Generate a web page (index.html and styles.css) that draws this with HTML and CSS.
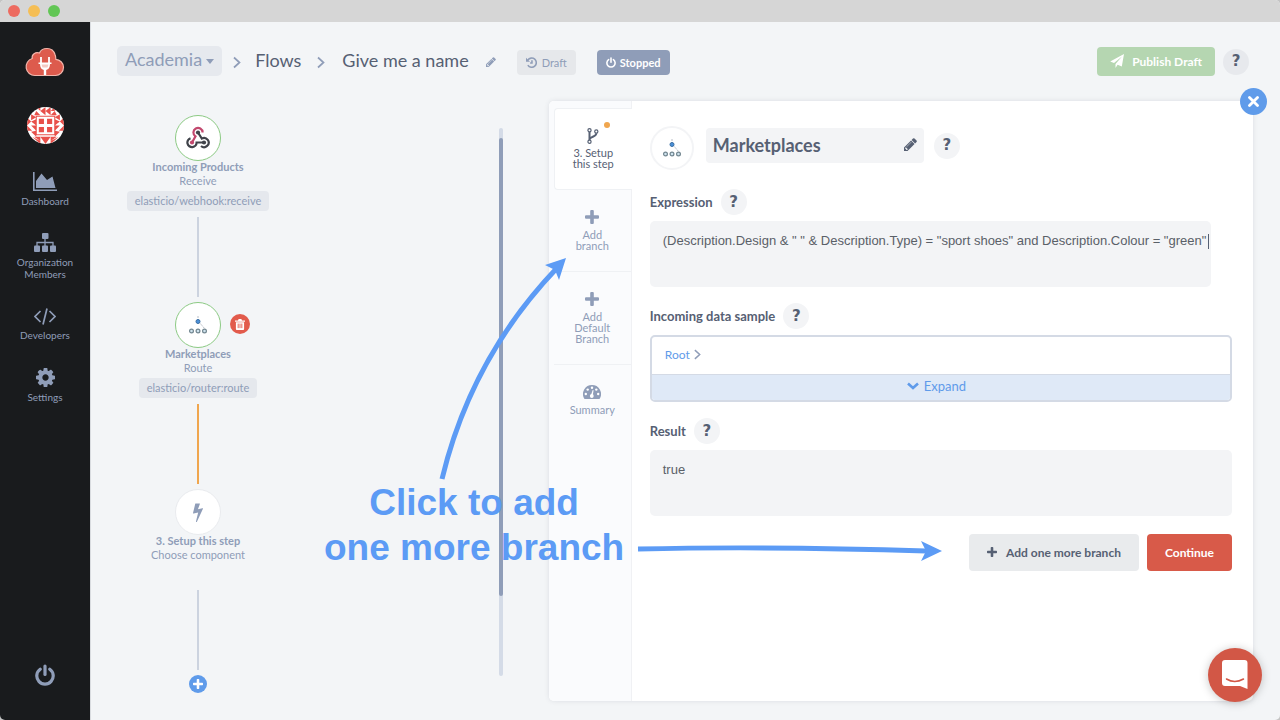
FILE: index.html
```html
<!DOCTYPE html>
<html lang="en">
<head>
<meta charset="utf-8">
<title>Academia – Flow editor</title>
<link rel="stylesheet" href="styles.css">
</head>
<body>
<svg class="defs" aria-hidden="true">
  <symbol id="plus" viewBox="0 0 14 14"><path d="M5.200 1a1 1 0 0 1 1-1h1.600a1 1 0 0 1 1 1v4.200H13a1 1 0 0 1 1 1v1.600a1 1 0 0 1-1 1H8.800V13a1 1 0 0 1-1 1H6.200a1 1 0 0 1-1-1V8.800H1a1 1 0 0 1-1-1V6.200a1 1 0 0 1 1-1h4.200z"/></symbol>
  <symbol id="pencil" viewBox="128 128 1536 1536"><path d="M491 1536l91-91-235-235-91 91v107h128v128h107zm523-928q0-22-22-22-10 0-17 7l-542 542q-7 7-7 17 0 22 22 22 10 0 17-7l542-542q7-7 7-17zm-54-192l416 416-832 832h-416v-416zm683 96q0 53-37 90l-166 166-416-416 166-165q36-38 90-38 53 0 91 38l235 234q37 39 37 91z"/></symbol>
  <symbol id="power" viewBox="0 0 20 22"><g fill="none" stroke="currentColor" stroke-width="3.200" stroke-linecap="round"><path d="M5.200 5.200a8.200 8.200 0 1 0 9.600 0"/><path d="M10 2v8.500"/></g></symbol>
  <symbol id="chevron" viewBox="0 0 8 12"><path d="M1 1l5.500 5L1 11" fill="none" stroke="currentColor" stroke-width="1.700"/></symbol>
  <symbol id="router" viewBox="0 0 20 20"><path d="M10 1v4M11 7l6 7" stroke="#b9bec6" stroke-width="1" stroke-dasharray="2 1"/><circle cx="10" cy="6.500" r="2" fill="#4a90d9" stroke="#3b6fa5"/><g fill="#cfe3ee" stroke="#71858f" stroke-width="1.200"><circle cx="3.500" cy="16" r="1.900"/><circle cx="10" cy="16" r="1.900"/><circle cx="16.500" cy="16" r="1.900"/></g></symbol>
</svg>

<div class="window">
  <div class="titlebar"><span class="light light-close"></span><span class="light light-min"></span><span class="light light-max"></span></div>
  <div class="app">
    <nav class="sidebar">
      <a class="logo" href="#" aria-label="Home"><svg width="40" height="30" viewBox="0 0 40 30"><path d="M10 28.500a8.700 8.700 0 0 1-2.800-17C6.500 7.500 10.500 4.500 14.500 6c2-5.500 13-7 15.500 1.500 1 2.200.8 3.700.8 4.800 4 .2 7.700 3.600 7.700 8 0 4.700-3.600 8.200-8 8.200z" fill="#dd5b4d" stroke="#f2b6ac" stroke-width="1.200"/><path d="M16 10v6M24 10v6" stroke="#fff" stroke-width="1.800"/><path d="M13.500 15.500h13v1.500h-1.500c0 3.500-1.500 5.500-3.800 6v5h-2.400v-5c-2.300-.5-3.800-2.500-3.800-6h-1.500z" fill="#fff"/><path d="M16.500 17.500h7l-1 3h-5z" fill="#f3cbc5"/></svg></a>
      <a class="avatar" href="#" aria-label="Profile"><svg width="37" height="37" viewBox="0 0 36 36">
        <path fill="#fff" d="M0 0h36v36H0z"/>
        <g fill="#e8504a"><path d="M9 0l4 4V0zM13 4l5-4v8zM18 4l5-4v8zM23 4l4-4v4zM9 4l4 4H7zM27 4l-4 4h6zM4 7l5 3-5 3zM32 7l-5 3 5 3zM0 10l4 4-4 4zM4 14l5-2v6zM36 10l-4 4 4 4zM32 14l-5-2v6zM0 18l5 5H0zM4 18l5 5v-5zM36 18l-5 5h5zM32 18l-5 5v-5zM4 24l5 5V23zM32 24l-5 5v-6zM7 29l6 4v-4zM29 29l-6 4v-4zM13 29l5 7v-7zM23 29l-5 7v-7zM5 29l8 7v-3zM31 29l-8 7v-3z"/>
        <path d="M8.500 8.500h19v19h-19z"/></g>
        <path fill="#fff" d="M9.500 9.500h17v17h-17z"/><path fill="#e8504a" d="M11.500 11.500h5v5h-5zM19.500 11.500h5v5h-5zM11.500 19.500h5v5h-5zM19.500 19.500h5v5h-5z"/></svg></a>
      <a class="nav-item" href="#"><svg width="24" height="19" viewBox="0 0 24 19"><path d="M.8 0v18.200H24" fill="none" stroke="currentColor" stroke-width="1.600"/><path fill="currentColor" d="M3 16V9l5.500-7.500L14 8l5.500-3.500L22.500 16z"/></svg><span>Dashboard</span></a>
      <a class="nav-item nav-org" href="#"><svg width="22" height="19" viewBox="0 0 22 19"><g fill="currentColor"><rect x="8" width="6.500" height="6" rx="1"/><rect y="12.500" width="6" height="6.500" rx="1"/><rect x="8" y="12.500" width="6" height="6.500" rx="1"/><rect x="16" y="12.500" width="6" height="6.500" rx="1"/></g><path d="M11 5v8M3 13V9.500h16V13" fill="none" stroke="currentColor" stroke-width="1.300"/></svg><span>Organization Members</span></a>
      <a class="nav-item nav-dev" href="#"><svg width="22" height="17" viewBox="0 0 22 17"><g fill="none" stroke="currentColor" stroke-width="1.700"><path d="M6.500 3L1 8.500 6.500 14M15.500 3L21 8.500 15.500 14M13 .5l-4 16"/></g></svg><span>Developers</span></a>
      <a class="nav-item nav-set" href="#"><svg width="19" height="19" viewBox="128 128 1536 1536"><path fill="currentColor" d="M1152 896q0-106-75-181t-181-75-181 75-75 181 75 181 181 75 181-75 75-181zm512-109v222q0 12-8 23t-20 13l-185 28q-19 54-39 91 35 50 107 138 10 12 10 25t-9 23q-27 37-99 108t-94 71q-12 0-26-9l-138-108q-44 23-91 38-16 136-29 186-7 28-36 28h-222q-14 0-24.500-8.500t-11.500-21.500l-28-184q-49-16-90-37l-141 107q-10 9-25 9-14 0-25-11-126-114-165-168-7-10-7-23 0-12 8-23 15-21 51-66.500t54-70.500q-27-50-41-99l-183-27q-13-2-21-12.500t-8-23.500v-222q0-12 8-23t19-13l186-28q14-46 39-92-40-57-107-138-10-12-10-24 0-10 9-23 26-36 98.500-107.500t94.500-71.500q13 0 26 10l138 107q44-23 91-38 16-136 29-186 7-28 36-28h222q14 0 24.500 8.500t11.500 21.500l28 184q49 16 90 37l142-107q9-9 24-9 13 0 25 10 129 119 165 170 7 8 7 22 0 12-8 23-15 21-51 66.500t-54 70.500q26 50 41 98l183 28q13 2 21 12.500t8 23.500z"/></svg><span>Settings</span></a>
      <button class="logout" aria-label="Log out"><svg width="20" height="22"><use href="#power"/></svg></button>
    </nav>

    <main class="main">
      <header class="topbar">
        <button class="org-menu" aria-haspopup="true">Academia<span class="arrow-down"></span></button>
        <svg class="crumb-sep" width="8" height="13"><use href="#chevron"/></svg>
        <a class="crumb" href="#">Flows</a>
        <svg class="crumb-sep" width="8" height="13"><use href="#chevron"/></svg>
        <span class="crumb crumb-name">Give me a name</span>
        <button class="edit-name" aria-label="Rename flow"><svg width="10" height="10" fill="currentColor"><use href="#pencil"/></svg></button>
        <span class="badge badge-draft"><svg width="11" height="11" viewBox="0 0 12 12"><path d="M2 3.500A5 5 0 1 1 2 8.800M6.500 3.500v3H4.500" fill="none" stroke="currentColor" stroke-width="1.700"/><path fill="currentColor" d="M0 .8v4.400h4.400z"/></svg>Draft</span>
        <button class="badge badge-stopped"><svg width="10" height="11"><use href="#power"/></svg>Stopped</button>
        <button class="publish"><svg width="14" height="14" viewBox="0 0 14 14"><path fill="currentColor" d="M14 0l-2.200 12.500-4.200-1.800L5.500 14v-4L12 2.500 4 9 .2 7.500z"/></svg>Publish Draft</button>
        <button class="help help-top" aria-label="Help">?</button>
      </header>

      <div class="workspace">
        <section class="canvas">
          <div class="flow">
            <div class="node node-done"><svg width="26" height="26" viewBox="0 0 26 26" fill="none" stroke-width="2.200"><path d="M7 17.500L10.500 11.400A4.600 4.600 0 1 1 17.600 7.500" stroke="#c2486e"/><path d="M13 7.500L16.800 13.500A4.600 4.600 0 1 1 16 21M5.500 13.200A4.600 4.600 0 1 0 11.600 17.500H19" stroke="#40434a"/><circle cx="13" cy="7.500" r="2.100" fill="#40434a"/><circle cx="7" cy="17.500" r="2.100" fill="#c2486e"/><circle cx="19" cy="17.500" r="2.100" fill="#40434a"/></svg></div>
            <strong class="node-title">Incoming Products</strong>
            <span class="node-sub">Receive</span>
            <span class="node-chip">elasticio/webhook:receive</span>
            <span class="link"></span>
            <div class="node node-done"><svg width="20" height="20"><use href="#router"/></svg>
              <button class="remove" aria-label="Delete step"><svg width="10" height="11" viewBox="0 0 11 12"><path fill="#fff" d="M4 0h3l.7 1.500H11V3H0V1.500h3.300zM1 3.500h9V11a1 1 0 0 1-1 1H2a1 1 0 0 1-1-1z"/><path d="M3.500 5v5M5.500 5v5M7.500 5v5" stroke="#e25b4c"/></svg></button></div>
            <strong class="node-title">Marketplaces</strong>
            <span class="node-sub">Route</span>
            <span class="node-chip">elasticio/router:route</span>
            <span class="link link-active"></span>
            <div class="node"><svg width="20" height="20" viewBox="0 0 1792 1792"><path fill="#8f9db8" d="M1333 566q18 20 7 44l-540 1157q-13 25-42 25-4 0-14-2-17-5-25.500-19t-4.500-30l197-808-406 101q-4 1-12 1-18 0-31-11-18-15-13-39l201-825q4-14 16-23t28-9h328q19 0 32 12.500t13 29.500q0 8-5 18l-171 463 396-98q8-2 12-2 19 0 34 15z"/></svg></div>
            <strong class="node-title">3. Setup this step</strong>
            <span class="node-sub">Choose component</span>
            <span class="link link-last"></span>
            <button class="add-step" aria-label="Add step"><svg width="10" height="10" fill="#fff"><use href="#plus"/></svg></button>
          </div>
          <div class="track"><div class="thumb"></div></div>
        </section>

        <section class="panel">
          <button class="close" aria-label="Close"><svg width="11" height="11" viewBox="0 0 11 11"><path d="M1.500 1.500l8 8M9.500 1.500l-8 8" stroke="#fff" stroke-width="2.800" stroke-linecap="round"/></svg></button>
          <div class="tabs">
            <button class="tab tab-active"><span class="dot"></span><svg width="12" height="16" viewBox="0 0 12 16" fill="none" stroke="currentColor"><g stroke-width="1.200"><circle cx="2.500" cy="2.200" r="1.600"/><circle cx="2.500" cy="13.800" r="1.600"/><circle cx="9.300" cy="3.500" r="1.600"/></g><path d="M2.500 4v8M9.300 5.200c0 4-6 3-6.500 6" stroke-width="2"/></svg>3. Setup<br>this step</button>
            <button class="tab"><svg width="14" height="14" fill="currentColor"><use href="#plus"/></svg>Add<br>branch</button>
            <button class="tab tab-tall"><svg width="14" height="14" fill="currentColor"><use href="#plus"/></svg>Add<br>Default<br>Branch</button>
            <button class="tab tab-last"><svg width="18" height="14" viewBox="0 0 18 14"><path fill="currentColor" d="M9 0a9 9 0 0 1 7.800 13.500q-.3.500-.8.500H2q-.5 0-.8-.5A9 9 0 0 1 9 0z"/><g fill="#fff"><circle cx="2.800" cy="9" r="1.200"/><circle cx="4.700" cy="4.600" r="1.200"/><circle cx="9" cy="2.700" r="1.200"/><circle cx="13.300" cy="4.600" r="1.200"/><circle cx="15.200" cy="9" r="1.200"/><circle cx="8.800" cy="11" r="1.900"/><path d="M8 10l1.700-5 .9.300-.9 5.200z"/></g></svg>Summary</button>
          </div>
          <form class="form">
            <div class="step-head">
              <span class="step-icon"><svg width="20" height="20"><use href="#router"/></svg></span>
              <button type="button" class="step-name">Marketplaces<svg width="13" height="13" fill="currentColor"><use href="#pencil"/></svg></button>
              <button type="button" class="help" aria-label="Help">?</button>
            </div>
            <div class="label-row"><label for="expression">Expression</label><button type="button" class="help" aria-label="Help on expression">?</button></div>
            <div class="expression"><textarea id="expression" class="area area-code" spellcheck="false">(Description.Design &amp; " " &amp; Description.Type) = "sport shoes" and Description.Colour = "green"</textarea><span class="caret"></span></div>
            <div class="label-row"><span>Incoming data sample</span><button type="button" class="help" aria-label="Help on data sample">?</button></div>
            <div class="sample">
              <div class="sample-path"><a href="#">Root</a><svg width="7" height="11"><use href="#chevron"/></svg></div>
              <button type="button" class="expand"><svg width="12" height="8" viewBox="0 0 12 8"><path d="M1 1.500l5 4.500 5-4.500" fill="none" stroke="currentColor" stroke-width="2.600"/></svg>Expand</button>
            </div>
            <div class="label-row"><label for="result">Result</label><button type="button" class="help" aria-label="Help on result">?</button></div>
            <textarea id="result" class="area" readonly>true</textarea>
            <div class="actions">
              <button type="button" class="btn btn-add"><svg width="10" height="10" fill="currentColor"><use href="#plus"/></svg>Add one more branch</button>
              <button type="button" class="btn btn-go">Continue</button>
            </div>
          </form>
        </section>
      </div>
    </main>
  </div>
  <div class="callout">
    <svg class="callout-arrows" width="1280" height="720" viewBox="0 0 1280 720"><g fill="none" stroke="#5c9bf5" stroke-width="5"><path d="M442 479Q471 358 557 268"/><path d="M638 549Q770 546 926 551"/></g><path fill="#5c9bf5" d="M566 258l-21 7 10 5 4 10zM942 551l-21-10 5 10-5 10z"/></svg>
    <p class="callout-text">Click to add<br>one more branch</p>
  </div>
  <button class="chat" aria-label="Open chat"><svg width="26" height="30" viewBox="0 0 26 30"><path fill="#fff" d="M3 0h19.500a3 3 0 0 1 3 3v26L18 26H3a3 3 0 0 1-3-3V3a3 3 0 0 1 3-3z"/><path d="M4.500 19q8 5 17 0" fill="none" stroke="#d25746" stroke-width="1.500" stroke-linecap="round"/></svg></button>
</div>
</body>
</html>
```
FILE: styles.css
```css
* { box-sizing: border-box; }
body { margin: 0; background: #c4c4c4; font-family: Lato, "Liberation Sans", sans-serif; font-size: 12px; color: #566073; }
button { font: inherit; color: inherit; border: 0; background: none; padding: 0; margin: 0; cursor: pointer; }
a { color: inherit; text-decoration: none; }
svg { flex: none; display: block; }
.defs { position: absolute; width: 0; height: 0; }

.window { position: relative; display: flex; flex-direction: column; min-height: 100vh; border-radius: 5px; overflow: hidden; background: #f3f5f7; }
.titlebar { display: flex; align-items: center; gap: 8px; height: 22px; padding-left: 8px; background: #d6d6d6; }
.light { width: 12px; height: 12px; border-radius: 50%; }
.light-close { background: #ed6b60; }
.light-min { background: #f5be55; }
.light-max { background: #62c655; }
.app { display: flex; flex: 1; }

.sidebar { display: flex; flex-direction: column; align-items: center; width: 90px; padding: 25px 0 34px; background: #191b1d; color: #8f9db8; font-size: 10px; line-height: 12px; }
.avatar { width: 37px; height: 37px; margin: 30px 0 28px; border-radius: 50%; overflow: hidden; }
.nav-item { display: flex; flex-direction: column; align-items: center; gap: 4px; width: 68px; text-align: center; }
.nav-org { margin-top: 26px; }
.nav-dev { margin-top: 28px; }
.nav-set { margin-top: 27px; }
.logout { margin-top: auto; }

.main { display: flex; flex-direction: column; flex: 1; min-width: 0; border-left: 1px solid #d9dce0; }
.topbar { display: flex; align-items: center; height: 79px; padding: 0 31px 0 26px; }
.org-menu { display: flex; align-items: center; gap: 4px; height: 30px; padding: 0 8px 3px; margin-bottom: 2px; border-radius: 5px; background: #e6e9ee; color: #8f9db8; font-size: 18px; }
.arrow-down { margin-top: 4px; border: 4px solid transparent; border-top: 5px solid #8f9db8; border-bottom: 0; }
.crumb-sep { margin: 2px 14px 0 11px; color: #8f9db8; }
.crumb { font-size: 18px; line-height: 24px; padding-bottom: 3px; }
.crumb + .crumb-sep { margin-left: 16px; margin-right: 17px; }
.edit-name { margin: 0 21px 0 17px; color: #8f9db8; }
.badge { display: flex; align-items: center; gap: 5px; height: 25px; padding: 0 9px; margin-top: 1px; border-radius: 4px; font-size: 11px; }
.badge-draft { margin-right: 21px; background: #e6e8eb; color: #8f9db8; }
.badge-stopped { background: #8f9db8; color: #fff; font-weight: 700; gap: 4px; }
.publish { display: flex; align-items: center; gap: 8px; height: 29px; margin: 0 8px 0 auto; padding: 0 13px 1px; border-radius: 4px; background: #b5d6b1; color: #fff; font-weight: 700; }
.help { flex: none; width: 26px; height: 26px; border-radius: 50%; background: #f3f4f6; color: #566073; font: 700 15px/25px "DejaVu Sans", sans-serif; text-align: center; }
.help-top { background: #e7e9ed; }

.workspace { display: grid; grid-template-columns: minmax(0, 13fr) minmax(0, 20fr); flex: 1; padding: 0 27px 19px 0; }
.canvas { display: flex; justify-content: space-between; padding: 14px 46px 0 0; }
.flow { display: flex; flex-direction: column; align-items: center; width: 214px; color: #8f9db8; }
.node { position: relative; display: flex; align-items: center; justify-content: center; width: 46px; height: 46px; border: 1px solid #e9ebee; border-radius: 50%; background: #fff; }
.node-done { border-color: #8cca84; }
.remove { position: absolute; left: 54px; top: 11px; display: flex; align-items: center; justify-content: center; width: 20px; height: 20px; border-radius: 50%; background: #e25b4c; }
.node-title { font-size: 11px; line-height: 12px; }
.node-sub { font-size: 11px; line-height: 15px; }
.node-chip { margin-top: 3px; padding: 0 8px; border-radius: 4px; background: #e5e8ed; font-size: 11px; line-height: 20px; }
.link { width: 2px; height: 80px; margin: 6px 0 5px; background: #ccd3df; }
.link-active { background: #f0a64e; }
.link-last { margin-top: 28px; }
.add-step { display: flex; align-items: center; justify-content: center; width: 18px; height: 18px; border-radius: 50%; background: #5f9bea; }
.track { width: 4px; height: 548px; margin-top: 13px; padding-top: 10px; border-radius: 2px; background: #d4dbe7; }
.thumb { height: 458px; border-radius: 2px; background: #8f9db8; }

.panel { position: relative; display: flex; min-height: 600px; border-radius: 5px; background: #fff; box-shadow: 0 0 5px rgba(60, 70, 90, .13); }
.close { position: absolute; right: -14px; top: -13px; display: flex; align-items: center; justify-content: center; width: 27px; height: 27px; border-radius: 50%; background: #5f9bea; }
.tabs { flex: none; width: 83px; padding: 7px 0 0 5px; border-right: 1px solid #f0f1f4; border-radius: 5px 0 0 5px; background: #fafbfd; }
.tab { position: relative; display: flex; flex-direction: column; align-items: center; gap: 5px; width: 100%; height: 82px; padding-top: 20px; border-bottom: 1px solid #eff1f4; color: #8f9db8; font-size: 11px; line-height: 11px; text-align: center; }
.tab-active { width: 78px; padding-top: 19px; gap: 3px; border: 1px solid #eff1f4; border-right: 0; border-radius: 4px 0 0 4px; background: #fff; color: #566073; }
.tab-tall { height: 93px; }
.tab-last { border: 0; }
.dot { position: absolute; left: 49px; top: 13px; width: 6px; height: 6px; border-radius: 50%; background: #f0a64e; }

.form { flex: 1; min-width: 0; padding: 25px 21px 26px 18px; }
.step-head { display: flex; align-items: center; gap: 10px; margin-bottom: 20px; }
.step-icon { display: flex; align-items: center; justify-content: center; width: 44px; height: 44px; margin-right: 2px; border: 2px solid #f3f4f6; border-radius: 50%; }
.step-name { display: flex; align-items: center; justify-content: space-between; width: 218px; height: 35px; margin-bottom: 5px; padding: 0 7px 2px; border-radius: 4px; background: #f3f4f6; font-size: 18px; font-weight: 700; }
.step-head .help { margin-bottom: 5px; }
.label-row { display: flex; align-items: center; gap: 8px; height: 24px; margin-bottom: 7px; font-size: 13px; font-weight: 700; }
.area { display: block; width: 100%; height: 66px; padding: 12px 13px; border: 0; border-radius: 5px; background: #f3f4f6; color: #5a6068; font: 13px/15px "Liberation Sans", Arial, sans-serif; resize: none; outline: 0; overflow: hidden; }
.area-code { padding-right: 2px; }
.expression { position: relative; margin: 0 21px 17px 0; }
.caret { position: absolute; right: 2px; top: 13px; width: 1px; height: 15px; background: #566073; }
.sample { margin-bottom: 17px; border: 2px solid #d4dae5; border-radius: 5px; overflow: hidden; }
.sample-path { display: flex; align-items: center; gap: 4px; height: 37px; padding: 0 0 2px 13px; color: #5f9bea; }
.sample-path svg { color: #8f9db8; }
.expand { display: flex; align-items: center; justify-content: center; gap: 5px; width: 100%; height: 26px; padding: 0 9px 3px 0; border-top: 1px solid #d4dae5; background: #dfe9f7; color: #5f9bea; font-size: 13px; }
.actions { display: flex; justify-content: flex-end; gap: 8px; margin-top: 18px; }
.btn { display: flex; align-items: center; gap: 9px; height: 37px; padding: 0 18px 1px; border-radius: 4px; font-weight: 700; }
.btn-add { background: #e9ebed; }
.btn-go { background: #d85a49; color: #fff; }

.callout { position: absolute; left: 0; top: 0; pointer-events: none; }
.callout-text { position: absolute; left: 324px; top: 480px; margin: 0; color: #5c9bf5; font: 700 37px/45px "Liberation Sans", Arial, sans-serif; text-align: center; white-space: nowrap; }
.chat { position: absolute; right: 18px; bottom: 18px; display: flex; align-items: center; justify-content: center; width: 54px; height: 54px; border-radius: 50%; background: #d25746; box-shadow: 0 1px 10px rgba(0, 0, 0, .22); }
```
